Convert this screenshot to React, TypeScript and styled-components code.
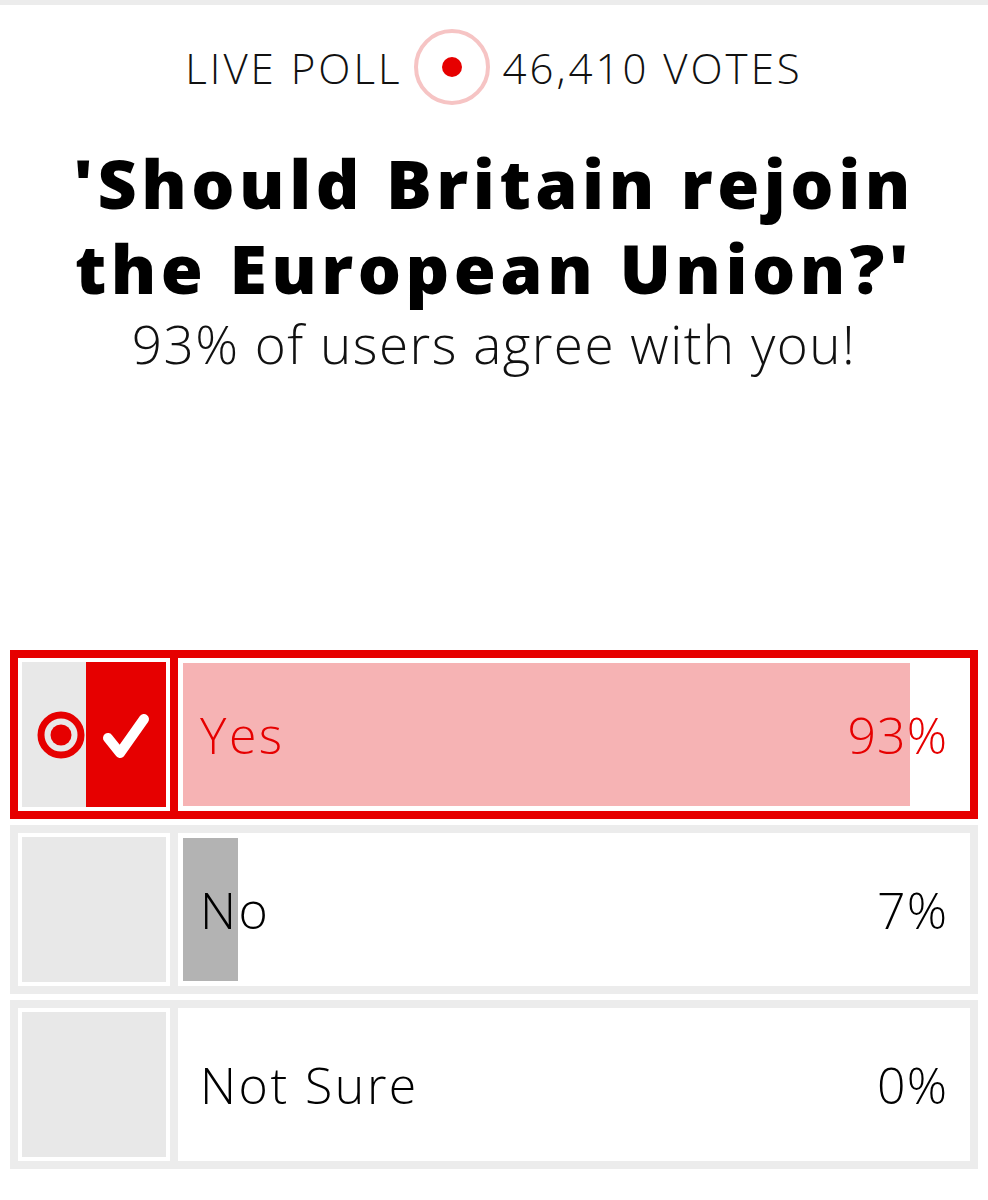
import React from "react";
import styled, { createGlobalStyle } from "styled-components";

const GlobalStyle = createGlobalStyle`
  html, body {
    margin: 0;
    padding: 0;
    background: #ffffff;
  }
  body {
    font-family: "Open Sans", "Liberation Sans", sans-serif;
    color: #111111;
  }
`;

const RED = "#e60000";

const Page = styled.div`
  width: 988px;
  min-height: 1200px;
  background: #ffffff;
`;

const TopStrip = styled.div`
  height: 5px;
  background: #ececec;
`;

const Header = styled.header`
  display: flex;
  flex-direction: column;
  align-items: center;
  padding-top: 24px;
`;

const LiveRow = styled.div`
  display: flex;
  align-items: center;
  gap: 12px;
  height: 76px;
`;

const LiveText = styled.span`
  font-size: 42px;
  font-weight: 300;
  letter-spacing: 3px;
  color: #111111;
`;

const LiveDot = styled.div`
  width: 76px;
  height: 76px;
  box-sizing: border-box;
  border: 4px solid #f6c4c4;
  border-radius: 50%;
  display: flex;
  align-items: center;
  justify-content: center;

  &::after {
    content: "";
    width: 20px;
    height: 20px;
    border-radius: 50%;
    background: ${RED};
  }
`;

const Title = styled.h1`
  margin: 35px 0 0;
  font-size: 68px;
  line-height: 85px;
  font-weight: 800;
  letter-spacing: 4.5px;
  text-align: center;
  color: #000000;
`;

const Subtitle = styled.p`
  margin: 5px 0 0;
  font-size: 53px;
  line-height: 58px;
  font-weight: 300;
  letter-spacing: 1.5px;
  color: #111111;
`;

const OptionList = styled.div`
  display: flex;
  flex-direction: column;
  gap: 6px;
  margin: 277px 10px 0;
`;

const OptionRow = styled.div<{ $selected: boolean }>`
  display: flex;
  gap: 8px;
  height: 169px;
  box-sizing: border-box;
  border: 8px solid ${({ $selected }) => ($selected ? RED : "#ececec")};
  background: ${({ $selected }) => ($selected ? RED : "#ececec")};
`;

const ChoiceBox = styled.div`
  display: flex;
  width: 152px;
  box-sizing: border-box;
  border: 4px solid #ffffff;
  background: #e8e8e8;
`;

const ChoiceMark = styled.div`
  flex: 1;
  display: flex;
  align-items: center;
  justify-content: flex-end;
`;

const ChoiceCheck = styled.div`
  width: 80px;
  display: flex;
  align-items: center;
  justify-content: center;
  background: ${RED};
`;

const ResultCell = styled.div`
  flex: 1;
  padding: 5px;
  background: #ffffff;
  display: flex;
`;

const ResultInner = styled.div`
  position: relative;
  flex: 1;
  display: flex;
  align-items: center;
  justify-content: space-between;
  padding: 0 17px;
`;

const ResultBar = styled.div<{ $selected: boolean }>`
  position: absolute;
  left: 0;
  top: 0;
  bottom: 0;
  background: ${({ $selected }) => ($selected ? "#f6b3b4" : "#b3b3b3")};
`;

const Label = styled.span<{ $selected: boolean }>`
  position: relative;
  font-size: 50px;
  font-weight: 300;
  letter-spacing: 2.5px;
  color: ${({ $selected }) => ($selected ? RED : "#000000")};
`;

const Percent = styled(Label)`
  letter-spacing: 1px;
`;

const Target = () => (
  <svg width="50" height="50" viewBox="0 0 50 50">
    <circle cx="25" cy="25" r="20" fill="none" stroke={RED} strokeWidth="7" />
    <circle cx="25" cy="25" r="10.5" fill={RED} />
  </svg>
);

const Check = () => (
  <svg width="52" height="52" viewBox="0 0 52 52">
    <path
      d="M8 29 L20 44 L44 10"
      fill="none"
      stroke="#ffffff"
      strokeWidth="10"
      strokeLinecap="round"
      strokeLinejoin="round"
    />
  </svg>
);

const options = [
  { label: "Yes", pct: 93, selected: true },
  { label: "No", pct: 7, selected: false },
  { label: "Not Sure", pct: 0, selected: false },
];

export default function App() {
  return (
    <Page>
      <GlobalStyle />
      <TopStrip />
      <Header>
        <LiveRow>
          <LiveText>LIVE POLL</LiveText>
          <LiveDot />
          <LiveText>46,410 VOTES</LiveText>
        </LiveRow>
        <Title>
          'Should Britain rejoin
          <br />
          the European Union?'
        </Title>
        <Subtitle>93% of users agree with you!</Subtitle>
      </Header>

      <OptionList>
        {options.map((opt) => (
          <OptionRow key={opt.label} $selected={opt.selected}>
            <ChoiceBox>
              {opt.selected && (
                <>
                  <ChoiceMark>
                    <Target />
                  </ChoiceMark>
                  <ChoiceCheck>
                    <Check />
                  </ChoiceCheck>
                </>
              )}
            </ChoiceBox>
            <ResultCell>
              <ResultInner>
                <ResultBar $selected={opt.selected} style={{ width: `${opt.pct}%` }} />
                <Label $selected={opt.selected}>{opt.label}</Label>
                <Percent $selected={opt.selected}>{opt.pct}%</Percent>
              </ResultInner>
            </ResultCell>
          </OptionRow>
        ))}
      </OptionList>
    </Page>
  );
}
